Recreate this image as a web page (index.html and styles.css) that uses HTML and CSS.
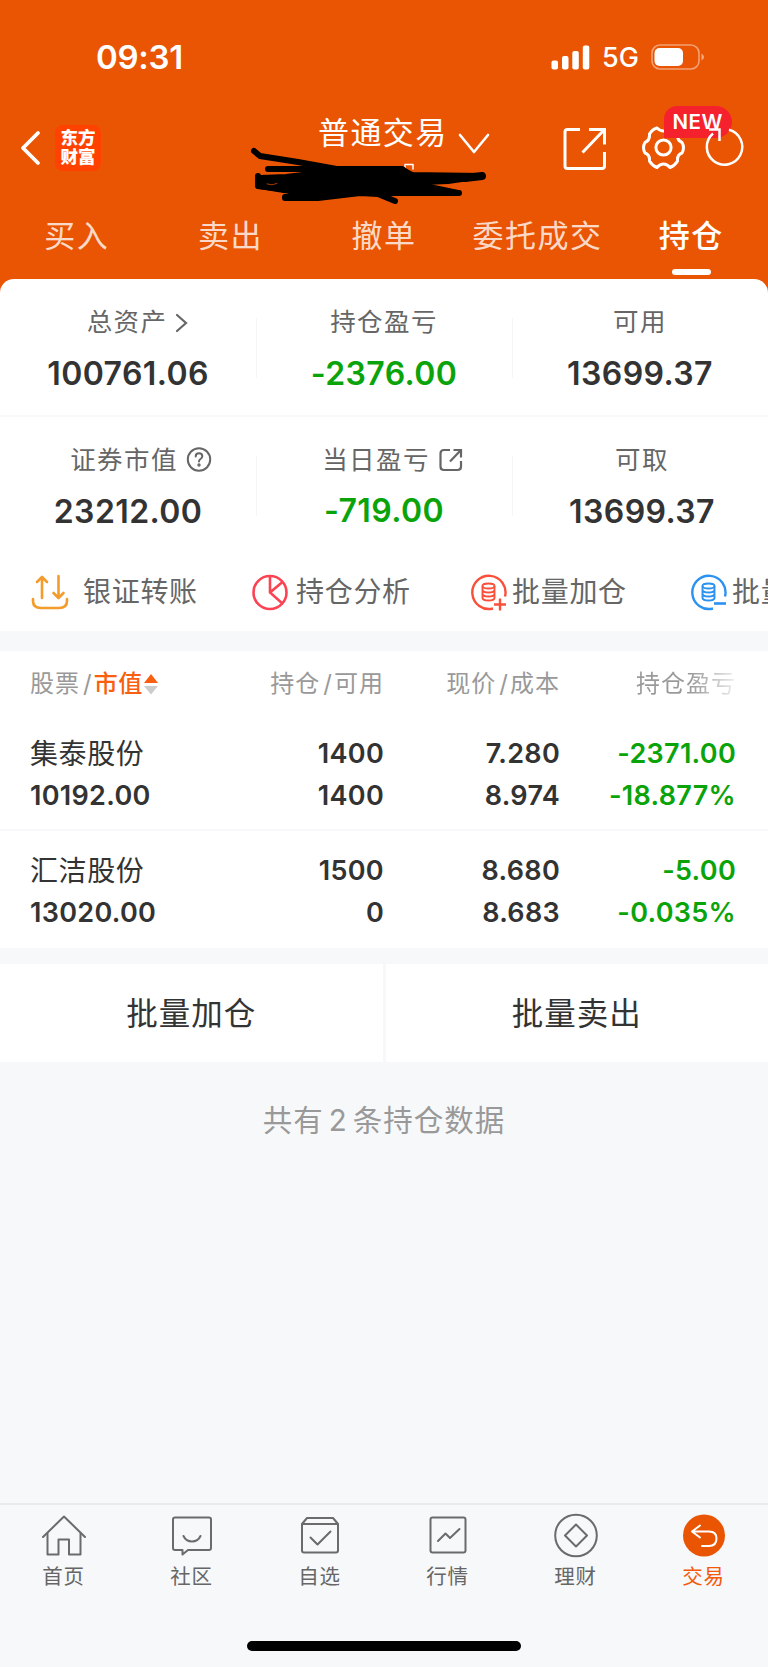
FILE: index.html
```html
<!DOCTYPE html>
<html lang="zh-CN">
<head>
  <meta charset="UTF-8" />
  <meta name="viewport" content="width=device-width, initial-scale=1.0"/>
  <title>持仓</title>
  <link rel="stylesheet" href="styles.css">
</head>
<body>
  <div class="wrap">
    <div class="top">
      <!-- Status bar -->
      <div class="status">
        <div class="time">09:31</div>
        <div class="status-right">
          <svg class="signal" width="39" height="25" viewBox="0 0 39 25" fill="#fff">
            <rect x="0.5" y="15.5" width="6.5" height="9" rx="2"/>
            <rect x="11" y="11" width="6.5" height="13.5" rx="2"/>
            <rect x="21.3" y="6" width="6.5" height="18.5" rx="2"/>
            <rect x="31.8" y="0.5" width="6.5" height="24" rx="2"/>
          </svg>
          <span class="net">5G</span>
          <svg class="battery" width="54" height="26" viewBox="0 0 54 26">
            <rect x="1" y="1" width="47" height="24" rx="8" fill="none" stroke="#fff" stroke-opacity="0.45" stroke-width="1.6"/>
            <rect x="3.5" y="4" width="28.5" height="18" rx="5" fill="#fff"/>
            <path d="M50.5 9.5 Q53 11 53 13 Q53 15 50.5 16.5 Z" fill="#fff" fill-opacity="0.5"/>
          </svg>
        </div>
      </div>

      <!-- Title bar -->
      <div class="titlebar">
        <svg class="back" width="22" height="36" viewBox="0 0 22 36" fill="none" stroke="#fff" stroke-width="3.8" stroke-linecap="round" stroke-linejoin="round">
          <path d="M18 3 L3 18 L18 33"/>
        </svg>
        <div class="logo"><span>东方</span><span>财富</span></div>
        <div class="account">
          <span>普通交易</span>
          <svg width="32" height="22" viewBox="0 0 32 22" fill="none" stroke="#fff" stroke-width="2.6" stroke-linecap="round" stroke-linejoin="round">
            <path d="M2 2 L16 19 L30 2"/>
          </svg>
        </div>
        <div class="actions">
          <svg class="share" width="44" height="44" viewBox="0 0 44 44" fill="none" stroke="#fff" stroke-width="3">
            <path d="M17 2.5 H4.5 Q2 2.5 2 5 V39 Q2 41.5 4.5 41.5 H39 Q41.5 41.5 41.5 39 V25"/>
            <path d="M26 2.5 H41.5 V17.5 M41 3 L19.5 25.5"/>
          </svg>
          <svg class="gear" width="46" height="44" viewBox="0 0 46 44" fill="none" stroke="#fff" stroke-width="3" stroke-linejoin="round">
            <path d="M16 2 Q19 5 22.500 5 Q26 5 29 2 Q34 3.500 36.500 8 Q36 14.500 41 16.500 Q44 21.500 41 27 Q36 28.500 36.500 35 Q34 39.500 29 41.500 Q26 38 22.500 38 Q19 38 16 41.500 Q11 39.500 8.500 35 Q9 28.500 4 27 Q1 21.500 4 16.500 Q9 14.500 8.500 8 Q11 3.500 16 2 Z"/>
            <circle cx="22.500" cy="21.500" r="7.600"/>
          </svg>
          <div class="refresh">
            <span class="badge">NEW</span>
            <svg width="42" height="42" viewBox="0 0 42 42" fill="none" stroke="#fff" stroke-width="2.5">
              <path d="M25 3.800 A17.700 17.700 0 1 1 9 7.500"/>
              <path d="M5 3.500 H15.500 V15"/>
            </svg>
          </div>
        </div>
        <!-- hidden account number -->
        <svg class="scribble" width="240" height="60" viewBox="0 0 240 60" fill="none" stroke="#000" stroke-width="6" stroke-linecap="round" stroke-linejoin="round">
          <path d="M155 24 V19.500 H163 V24" stroke="#fff" stroke-width="1.500"/>
          <path d="M4 6 L10 11 L48 17 L92 25"/>
          <path d="M18 24 H152 L160 30 L232 31 L198 36 L174 37"/>
          <path d="M232 31 L215 33 L190 33" stroke-width="8"/>
          <path d="M8 31 V41 L32 44 L58 49 L35 52 V53 L68 53 L110 48 L128 49 L145 56"/>
          <path d="M45 46 L68 48 L110 47 L145 48 H209"/>
          <path d="M11 33 L36 32 L95 25 L152 25 L164 31 L228 31 L195 34 L165 38 L184 43 L208 48 L120 48 L70 47 L34 45 L10 41 Z" fill="#000"/>
          <path d="M17 39 Q22 41 27 38.500" stroke="#ea5504" stroke-width="0.700"/>
        </svg>
      </div>

      <div class="tabs">
        <div class="tab">买入</div>
        <div class="tab">卖出</div>
        <div class="tab">撤单</div>
        <div class="tab">委托成交</div>
        <div class="tab active">持仓</div>
      </div>
    </div>

    <!-- Summary -->
    <div class="sheet">
      <div class="summary">
        <div class="cell">
          <div class="label arrow"><span>总资产</span>
            <svg width="13" height="22" viewBox="0 0 13 22" fill="none" stroke="#666" stroke-width="2.200" stroke-linecap="round"><path d="M2 3 L11 11 L2 19"/></svg>
          </div>
          <div class="value">100761.06</div>
        </div>
        <div class="cell">
          <div class="label"><span>持仓盈亏</span></div>
          <div class="value green">-2376.00</div>
        </div>
        <div class="cell">
          <div class="label"><span>可用</span></div>
          <div class="value">13699.37</div>
        </div>
      </div>
      <div class="summary second">
        <div class="cell">
          <div class="label help"><span>证券市值</span>
            <svg width="26" height="26" viewBox="0 0 26 26" fill="none" stroke="#666" stroke-width="2" stroke-linecap="round">
              <circle cx="13" cy="12.500" r="11.200"/>
              <path d="M9.700 9.500 Q9.700 6.300 13 6.300 Q16.300 6.300 16.300 9.300 Q16.300 11 14.500 12 Q13 12.900 13 14.500"/>
              <circle cx="13" cy="18" r="0.700" fill="#666"/>
            </svg>
          </div>
          <div class="value">23212.00</div>
        </div>
        <div class="cell">
          <div class="label link"><span>当日盈亏</span>
            <svg width="24" height="24" viewBox="0 0 24 24" fill="none" stroke="#666" stroke-width="2.200">
              <path d="M11 2 H5 Q1.500 2 1.500 5.500 V18.500 Q1.500 22 5 22 H18.500 Q22 22 22 18.500 V13"/>
              <path d="M14.500 2 H22 V9.500 M21.500 2.500 L11 13.500"/>
            </svg>
          </div>
          <div class="value green up">-719.00</div>
        </div>
        <div class="cell">
          <div class="label take"><span>可取</span></div>
          <div class="value take">13699.37</div>
        </div>
      </div>

      <div class="tools">
        <div class="tool transfer">
          <svg width="38" height="38" viewBox="0 0 38 38" fill="none" stroke="#f39c2c" stroke-width="2.600" stroke-linecap="round" stroke-linejoin="round">
            <path d="M11 24 V3 M6 8 L11 3 L16 8"/>
            <path d="M27.500 2 V23.500 M22.500 19 L27.500 24 L32.500 19"/>
            <path d="M2 25 V27 Q2 34 10 34 H28 Q36 34 36 27 V25"/>
          </svg>
          <span>银证转账</span>
        </div>
        <div class="tool">
          <svg width="38" height="38" viewBox="0 0 38 38" fill="none" stroke="#fa4453" stroke-width="2.600">
            <circle cx="19" cy="18.500" r="16.500"/>
            <path d="M19 2.500 V18.500 L32 30 M19 18.500 L31.500 8"/>
          </svg>
          <span>持仓分析</span>
        </div>
        <div class="tool batch">
          <svg width="38" height="38" viewBox="0 0 38 38" fill="none" stroke="#f9503c" stroke-width="2.400">
            <path d="M23 34.500 A16.600 16.600 0 1 1 35 22.500"/>
            <path d="M24 30.500 H36 M30 24.500 V36.500"/>
            <g stroke-width="1.900">
              <ellipse cx="18.500" cy="12" rx="6" ry="2.500"/>
              <path d="M12.500 12 V24 Q13 26.500 18.500 26.500 Q24 26.500 24.500 24 V12 M12.500 16 Q13 18.500 18.500 18.500 Q24 18.500 24.500 16 M12.500 20 Q13 22.500 18.500 22.500 Q24 22.500 24.500 20"/>
            </g>
          </svg>
          <span>批量加仓</span>
        </div>
        <div class="tool batch">
          <svg width="38" height="38" viewBox="0 0 38 38" fill="none" stroke="#2c92f0" stroke-width="2.400">
            <path d="M23 34.500 A16.600 16.600 0 1 1 35 22.500"/>
            <path d="M24 29.500 H36" stroke-width="2.600"/>
            <g stroke-width="1.900">
              <ellipse cx="18.500" cy="12" rx="6" ry="2.500"/>
              <path d="M12.500 12 V24 Q13 26.500 18.500 26.500 Q24 26.500 24.500 24 V12 M12.500 16 Q13 18.500 18.500 18.500 Q24 18.500 24.500 16 M12.500 20 Q13 22.500 18.500 22.500 Q24 22.500 24.500 20"/>
            </g>
          </svg>
          <span>批量</span>
        </div>
      </div>
    </div>

    <!-- Holdings -->
    <div class="holdings">
      <div class="row head">
        <div class="sort">股票<i>/</i><b>市值</b>
          <svg width="16" height="22" viewBox="0 0 16 22"><path d="M8 1 L15 10 H1 Z" fill="#fa5f10"/><path d="M8 21.500 L15 13 H1 Z" fill="#ccc"/></svg>
        </div>
        <div>持仓<i>/</i>可用</div>
        <div>现价<i>/</i>成本</div>
        <div class="fade">持仓盈亏</div>
      </div>
      <div class="row stock">
        <div><p class="name">集泰股份</p><p>10192.00</p></div>
        <div><p>1400</p><p>1400</p></div>
        <div><p>7.280</p><p>8.974</p></div>
        <div class="green"><p>-2371.00</p><p>-18.877%</p></div>
      </div>
      <div class="row stock">
        <div><p class="name">汇洁股份</p><p>13020.00</p></div>
        <div><p>1500</p><p>0</p></div>
        <div><p>8.680</p><p>8.683</p></div>
        <div class="green"><p>-5.00</p><p>-0.035%</p></div>
      </div>
    </div>

    <div class="buttons">
      <div class="btn">批量加仓</div>
      <div class="btn">批量卖出</div>
    </div>

    <p class="total">共有<span>2</span>条持仓数据</p>

    <!-- Bottom nav -->
    <div class="nav">
      <div class="nav-item">
        <svg width="46" height="46" viewBox="0 0 46 46" fill="none" stroke="#6b6b6b" stroke-width="2" stroke-linecap="round" stroke-linejoin="round">
          <path d="M2 24 L23 3.500 L44 24"/>
          <path d="M6.500 20.500 V41.500 H17.500 V26.500 H28 V41.500 H39.500 V20.500"/>
        </svg>
        <span>首页</span>
      </div>
      <div class="nav-item">
        <svg width="46" height="46" viewBox="0 0 46 46" fill="none" stroke="#6b6b6b" stroke-width="2" stroke-linecap="round" stroke-linejoin="round">
          <path d="M6 4.500 H40 Q42 4.500 42 6.500 V35 Q42 37 40 37 H19 L13.500 41.500 V37 H6 Q4 37 4 35 V6.500 Q4 4.500 6 4.500 Z"/>
          <path d="M14.500 23 Q17 28.500 23 28.500 Q29 28.500 31.500 23"/>
        </svg>
        <span>社区</span>
      </div>
      <div class="nav-item">
        <svg width="46" height="46" viewBox="0 0 46 46" fill="none" stroke="#6b6b6b" stroke-width="2" stroke-linecap="round" stroke-linejoin="round">
          <path d="M5 11 H41 V37.500 Q41 39.500 39 39.500 H7 Q5 39.500 5 37.500 Z M5 11 L10 5 H36 L41 11"/>
          <path d="M13.500 24.500 L20.500 31.500 L33.500 18.500"/>
        </svg>
        <span>自选</span>
      </div>
      <div class="nav-item">
        <svg width="46" height="46" viewBox="0 0 46 46" fill="none" stroke="#6b6b6b" stroke-width="2" stroke-linecap="round" stroke-linejoin="round">
          <rect x="5.500" y="4.500" width="35" height="35" rx="2"/>
          <path d="M13 28 L20.500 20.500 L25 25 L34.500 16"/>
        </svg>
        <span>行情</span>
      </div>
      <div class="nav-item">
        <svg width="46" height="46" viewBox="0 0 46 46" fill="none" stroke="#6b6b6b" stroke-width="2" stroke-linejoin="round">
          <circle cx="23" cy="22.500" r="20.800"/>
          <path d="M23 11.500 L34 22.500 L23 33.500 L12 22.500 Z"/>
        </svg>
        <span>理财</span>
      </div>
      <div class="nav-item on">
        <svg width="46" height="46" viewBox="0 0 46 46" fill="none" stroke="#fff" stroke-width="2" stroke-linecap="round" stroke-linejoin="round">
          <circle cx="23" cy="22.500" r="21" fill="#ea5504" stroke="none"/>
          <path d="M19 12.500 L11 18.500 L19 24.500 M11 18.500 H28 Q35.500 18.500 35.500 25.500 Q35.500 33 28 33 H21"/>
        </svg>
        <span>交易</span>
      </div>
    </div>
    <div class="home-bar"></div>
  </div>
</body>
</html>
```
FILE: styles.css
```css
:root {
  --bg: #f7f8fa;
  --orange: #ea5504;
  --text: #333;
  --label: #666;
  --muted: #999;
  --green: #0aa30a;
}
* {
  box-sizing: border-box;
  margin: 0;
  padding: 0;
}
body {
  font-family: Inter, "Noto Sans CJK SC", sans-serif;
  background: var(--bg);
  color: var(--text);
}
svg {
  display: block;
  flex-shrink: 0;
}

.wrap {
  width: 768px;
  height: 1667px;
  overflow: hidden;
  display: flex;
  flex-direction: column;
}

.top {
  background: var(--orange);
  color: #fff;
  height: 295px;
  flex-shrink: 0;
}

.status {
  height: 105px;
  padding: 9px 63px 0 96px;
  display: flex;
  justify-content: space-between;
  align-items: center;
}
.time {
  font-size: 33px;
  font-weight: 600;
  letter-spacing: -0.3px;
  line-height: 40px;
}
.status-right {
  display: flex;
  align-items: center;
}
.net {
  font-size: 27px;
  font-weight: 500;
  line-height: 32px;
  width: 61px;
  padding: 2px 0 0 12px;
}

.titlebar {
  position: relative;
  height: 95px;
  display: flex;
  padding-left: 20px;
}
.back {
  margin-top: 25px;
}
.logo {
  width: 46px;
  height: 46px;
  margin: 20px 0 0 13px;
  border-radius: 8px;
  background: #ff4200;
  display: flex;
  flex-direction: column;
  align-items: center;
  justify-content: center;
  font-size: 17.5px;
  font-weight: 900;
  line-height: 19px;
}
.logo span {
  position: relative;
  top: -1px;
}
.account {
  display: flex;
  margin: 8px 0 0 217px;
  font-size: 31px;
  letter-spacing: 1.4px;
  line-height: 40px;
}
.account svg {
  margin: 20px 0 0 10px;
}
.actions {
  display: flex;
  margin-left: 73px;
}
.share {
  margin-top: 22px;
}
.gear {
  margin: 21px 0 0 34px;
}
.refresh {
  position: relative;
  margin: 21px 0 0 17px;
}
.refresh svg {
  position: relative;
}
.badge {
  position: absolute;
  left: -40px;
  top: -20px;
  width: 68px;
  height: 32px;
  border-radius: 13px 16px 16px 0;
  background: #f5222d;
  font-size: 20.5px;
  font-weight: 600;
  letter-spacing: 0.5px;
  line-height: 31px;
  text-align: center;
}
.scribble {
  position: absolute;
  left: 250px;
  top: 40px;
}

.tabs {
  display: flex;
}
.tab {
  flex: 1;
  height: 79px;
  font-size: 31px;
  letter-spacing: 1.5px;
  line-height: 72px;
  text-align: center;
  color: rgba(255, 255, 255, 0.8);
}
.tab.active {
  color: #fff;
  font-weight: 500;
}
.tab.active::after {
  content: "";
  display: block;
  width: 39px;
  height: 6px;
  margin: -3px auto 0;
  border-radius: 3px;
  background: #fff;
}

.sheet {
  background: #fff;
  height: 352px;
  margin-top: -16px;
  border-radius: 14px 14px 0 0;
  flex-shrink: 0;
}
.summary {
  display: flex;
  height: 138px;
  padding-top: 25px;
  border-bottom: 2px solid #f7f8fa;
}
.summary.second {
  border-bottom: none;
}
.cell {
  flex: 1;
  position: relative;
}
.cell + .cell::before {
  content: "";
  position: absolute;
  left: 0;
  top: 14px;
  width: 1px;
  height: 60px;
  background: #f4f5f7;
}
.label {
  display: flex;
  justify-content: center;
  align-items: center;
  height: 38px;
  font-size: 25.5px;
  letter-spacing: 1.4px;
  color: var(--label);
}
.label span {
  line-height: 34px;
  padding-bottom: 3px;
}
.label.arrow {
  padding-left: 19px;
}
.label.arrow svg {
  margin-left: 8px;
}
.label.help {
  padding-left: 26px;
}
.label.help svg {
  margin: -2px 0 0 8px;
}
.label.link {
  padding-left: 17px;
}
.label.link svg {
  margin: -2px 0 0 9px;
}
.take {
  padding-left: 4px;
}
.value {
  font-size: 32px;
  font-weight: 600;
  letter-spacing: 0.4px;
  line-height: 40px;
  margin-top: 12px;
  text-align: center;
}
.value.up {
  margin-top: 11px;
}
.green,
.value.green {
  color: var(--green);
}

.tools {
  display: flex;
  height: 76px;
  padding-left: 31px;
  overflow: hidden;
  align-items: center;
}
.tool {
  display: flex;
  align-items: center;
  flex-shrink: 0;
  width: 220px;
  font-size: 28px;
  letter-spacing: 0.7px;
  color: var(--label);
  white-space: nowrap;
}
.tool span {
  line-height: 36px;
  padding-bottom: 3px;
}
.tool svg {
  margin-right: 7px;
}
.tool.transfer svg {
  margin-right: 14px;
}
.tool.batch svg {
  margin: 0 4px 0 -1px;
}

.holdings {
  background: #fff;
  height: 297px;
  margin-top: 20px;
  flex-shrink: 0;
}
.row {
  display: grid;
  grid-template-columns: 201px 153px 176px 176px;
  padding-left: 30px;
  text-align: right;
}
.row > div:first-child {
  text-align: left;
}
.head {
  height: 62px;
  font-size: 24px;
  letter-spacing: 1px;
  line-height: 65px;
  color: var(--muted);
}
.head i {
  font-style: normal;
  margin: 0 1px 0 3px;
}
.head b {
  font-weight: 500;
  color: #fa5f10;
}
.sort {
  display: flex;
  align-items: center;
}
.sort i {
  margin: 0 1px 0 3px;
}
.sort b {
  letter-spacing: 0.5px;
}
.sort svg {
  margin-left: 0;
}
.fade {
  background: linear-gradient(to right, #999 74%, #eee 100%);
  background-clip: text;
  -webkit-background-clip: text;
  color: transparent;
}
.stock {
  height: 118px;
  padding-top: 20px;
  border-bottom: 2px solid #f7f8fa;
  font-size: 27px;
  font-weight: 600;
  letter-spacing: 0.3px;
  line-height: 42px;
}
.stock:last-child {
  height: 117px;
  padding-top: 19px;
  border-bottom: none;
}
.stock .name {
  font-size: 28px;
  font-weight: 400;
  letter-spacing: 0.6px;
}

.buttons {
  display: flex;
  gap: 3px;
  margin-top: 16px;
  height: 98px;
  flex-shrink: 0;
}
.btn {
  flex: 1;
  background: #fff;
  font-size: 31.5px;
  letter-spacing: 1px;
  line-height: 100px;
  text-align: center;
}

.total {
  margin-top: 38px;
  font-size: 29.5px;
  letter-spacing: 1px;
  line-height: 40px;
  text-align: center;
  color: var(--muted);
}
.total span {
  margin: 0 5px;
}

.nav {
  display: flex;
  height: 138px;
  margin-top: auto;
  padding-top: 6px;
  border-top: 2px solid #e9eaec;
  flex-shrink: 0;
}
.nav-item {
  flex: 1;
  display: flex;
  flex-direction: column;
  align-items: center;
  font-size: 20.5px;
  line-height: 24px;
  color: var(--label);
}
.nav-item svg {
  margin: 2px 0 6px;
}
.nav-item.on span {
  color: #f5590a;
}
.nav-item span {
  letter-spacing: 0.7px;
  padding-right: 1px;
}

.home-bar {
  width: 274px;
  height: 10px;
  margin: 0 auto 16px;
  border-radius: 5px;
  background: #000;
  flex-shrink: 0;
}
```
